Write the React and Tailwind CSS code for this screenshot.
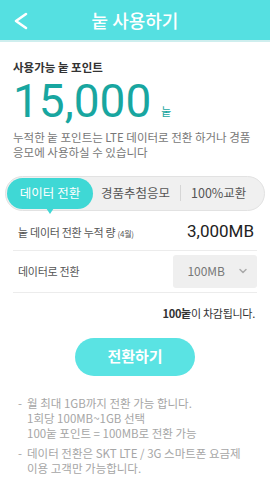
import { ChevronDown } from "lucide-react";

const kr = { fontFamily: '"Noto Sans CJK KR", "Noto Sans", sans-serif' };

const notes = [
  ["월 최대 1GB까지 전환 가능 합니다.", "1회당 100MB~1GB 선택", "100눝 포인트 = 100MB로 전환 가능"],
  ["데이터 전환은 SKT LTE / 3G 스마트폰 요금제", "이용 고객만 가능합니다."],
];

const App = () => {
  return (
    <div className="w-[270px] h-[480px] overflow-hidden bg-white" style={kr}>
      {/* 헤더 */}
      <header className="relative h-[42px] bg-[#55e0e1] border-b-2 border-[#cfeeee] flex items-center justify-center">
        <svg className="absolute left-[12px] top-[12px]" width="18" height="18" viewBox="0 0 18 18">
          <path d="M14 2 L4 9 L14 16" fill="none" stroke="white" strokeWidth="2.6" strokeLinecap="round" strokeLinejoin="round" />
        </svg>
        <h1 className="text-white text-[18px] font-medium">눝 사용하기</h1>
      </header>

      {/* 포인트 */}
      <section className="px-[13px] pt-[20px]">
        <p className="text-[11.5px] font-bold text-[#333] leading-none">사용가능 눝 포인트</p>
        <div className="flex items-end mt-[7px]">
          <span className="text-[46px] leading-[40px] text-[#18a6a0]" style={{ fontFamily: "Roboto, sans-serif" }}>
            15,000
          </span>
          <span className="ml-[10px] mb-[1px] text-[11px] text-[#18a6a0]">눝</span>
        </div>
        <p className="mt-[9px] text-[11.5px] leading-[15px] text-[#777]">
          누적한 눝 포인트는 LTE 데이터로 전환 하거나 경품
          <br />
          응모에 사용하실 수 있습니다
        </p>
      </section>

      {/* 탭 */}
      <div className="mx-[5px] mt-[16px] h-[35px] rounded-full bg-[#f0f0f0] border border-[#e2e2e2] flex items-center pr-[14px]">
        <div className="relative h-[31px] w-[86px] ml-[1px] rounded-full bg-[#3fd8d5] flex items-center justify-center">
          <span className="text-white text-[12.5px]">데이터 전환</span>
          <span className="absolute left-1/2 -translate-x-1/2 -bottom-[5px] w-0 h-0 border-l-[4px] border-r-[4px] border-t-[6px] border-l-transparent border-r-transparent border-t-[#3fd8d5]" />
        </div>
        <span className="ml-[8px] text-[12.5px] text-[#555]">경품추첨응모</span>
        <span className="mx-[10px] w-px h-[16px] bg-[#d6d6d6]" />
        <span className="text-[12.5px] text-[#555]">100%교환</span>
      </div>

      {/* 누적 량 */}
      <div className="mx-[13px] mt-[4px] h-[36px] flex items-center justify-between border-b border-[#ececec]">
        <span className="pl-[5px] text-[11px] text-[#555] tracking-tight">
          눝 데이터 전환 누적 량 <span className="text-[8px]">(4월)</span>
        </span>
        <span className="pr-[3px] text-[17px] text-[#222]" style={{ fontFamily: "Roboto, sans-serif" }}>
          3,000MB
        </span>
      </div>

      {/* 데이터로 전환 */}
      <div className="mx-[13px] h-[42px] flex items-center justify-between border-b border-[#ececec]">
        <span className="pl-[5px] text-[11px] text-[#555] tracking-tight">데이터로 전환</span>
        <div className="w-[84px] h-[33px] rounded-[3px] bg-[#efefef] flex items-center justify-end pr-[8px] gap-[12px]">
          <span className="text-[12px] text-[#777]">100MB</span>
          <ChevronDown size={12} strokeWidth={3} className="text-[#aaa]" />
        </div>
      </div>

      <p className="mx-[15px] mt-[12px] text-right text-[11px] leading-[16px] text-[#333] tracking-tight">
        <span className="font-bold">100눝</span>이 차감됩니다.
      </p>

      {/* 버튼 */}
      <div className="mt-[17px] flex justify-center">
        <button className="w-[120px] h-[38px] rounded-full bg-[#5ae3e3] text-white text-[15px] font-bold">
          전환하기
        </button>
      </div>

      {/* 안내 */}
      <ul className="mt-[20px] px-[18px] flex flex-col gap-[5px]">
        {notes.map((lines, i) => (
          <li key={i} className="flex text-[11.5px] leading-[15px] text-[#a6a6a6]">
            <span className="w-[9px] shrink-0">-</span>
            <span>
              {lines.map((l, j) => (
                <span key={j} className="block">{l}</span>
              ))}
            </span>
          </li>
        ))}
      </ul>
    </div>
  );
};

export default App;
